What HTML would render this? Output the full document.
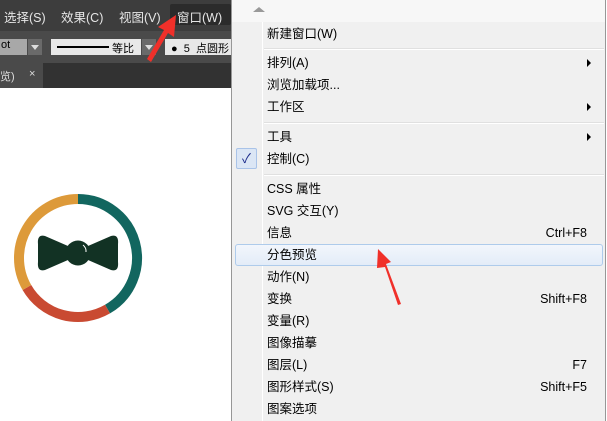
<!DOCTYPE html><html><head><meta charset="utf-8"><style>
*{margin:0;padding:0;box-sizing:border-box}
body{width:607px;height:421px;position:relative;overflow:hidden;background:#fff;font-family:"Liberation Sans","Noto Sans CJK SC",sans-serif;font-size:12px}
.mb{position:absolute;left:0;top:0;width:231px;height:31px;background:#3d3d3d;color:#e6e6e6}
.mb span{position:absolute;top:7px;font-size:12.5px}
.tb{position:absolute;left:0;top:31px;width:231px;height:32px;background:#4a4a4a}
.tab{position:absolute;left:0;top:63px;width:231px;height:25px;background:#323232}
.menu{position:absolute;left:231px;top:0;width:375px;height:421px;background:#f0f0f0;border-left:1px solid #979797;border-right:1px solid #979797}
.gut{position:absolute;left:30px;top:22px;width:1px;height:399px;background:#e2e3e3;border-right:1px solid #fff}
.it{position:absolute;left:35px;font-size:12.5px;color:#000;line-height:22px;height:22px;width:330px}
.it b{position:absolute;right:10px;font-weight:normal}
.it i{position:absolute;right:6px;top:7px;width:0;height:0;border-left:4px solid #000;border-top:4px solid transparent;border-bottom:4px solid transparent}
.sep{position:absolute;left:32px;width:340px;height:2px;border-top:1px solid #e0e0e0;border-bottom:1px solid #fff}
.dd{position:absolute;top:8px;width:14px;height:16px;background:#6a6a6a}
.dd::after{content:"";position:absolute;left:3px;top:6px;border-top:5px solid #ddd;border-left:4px solid transparent;border-right:4px solid transparent}
</style></head><body>
<div class="mb"><span style="left:4px">选择(S)</span><span style="left:61px">效果(C)</span><span style="left:119px">视图(V)</span>
<div style="position:absolute;left:170px;top:4px;width:61px;height:21px;background:#2b2b2b;border-radius:2px"></div><span style="left:177px">窗口(W)</span></div>
<div class="tb">
<div style="position:absolute;left:0;top:8px;width:27px;height:16px;background:#a8a8a8;font-size:11px;padding-left:1px">ot</div>
<div class="dd" style="left:28px"></div>
<div style="position:absolute;left:51px;top:8px;width:90px;height:16px;background:#e8e8e8"><div style="position:absolute;left:6px;top:7px;width:52px;height:2px;background:#000"></div><span style="position:absolute;left:61px;top:1px;font-size:11px">等比</span></div>
<div class="dd" style="left:142px"></div>
<div style="position:absolute;left:165px;top:8px;width:66px;height:16px;background:#e8e8e8;font-size:11px;padding:1px 0 0 6px">●&nbsp; 5 &nbsp;点圆形</div></div>
<div class="tab"><div style="position:absolute;left:0;top:0;width:43px;height:25px;background:#4a4a4a;color:#ddd;font-size:11px;padding-top:5px">览)<span style="position:absolute;left:29px">×</span></div></div>
<svg style="position:absolute;left:0;top:88px" width="231" height="333">
<g fill="none" stroke-width="10">
<path d="M78 111 A59 59 0 0 1 107.5 221.1" stroke="#12665f"/>
<path d="M107.5 221.1 A59 59 0 0 1 26.9 199.5" stroke="#c94a32"/>
<path d="M26.9 199.5 A59 59 0 0 1 78 111" stroke="#dd9a3a"/>
</g>
<path d="M38 156 Q37 146 45 148 L68 158 L88 158 L111 148 Q119 146 118 156 L118 174 Q119 184 111 182 L88 172 L68 172 L45 182 Q37 184 38 174Z" fill="#123224"/>
<circle cx="78" cy="165" r="12.5" fill="#123224"/>
<path d="M83 157 A8 8 0 0 1 86 164" stroke="#fff" stroke-width="1" fill="none"/>
</svg>
<div class="menu">
<div style="position:absolute;left:0;top:0;width:373px;height:22px;background:#f7f7f7"></div>
<div style="position:absolute;left:21px;top:7px;border-bottom:5px solid #999;border-left:6px solid transparent;border-right:6px solid transparent"></div>
<div class="gut"></div>
<div class="it" style="top:23px">新建窗口(W)</div>
<div class="sep" style="top:48px"></div>
<div class="it" style="top:52px">排列(A)<i></i></div>
<div class="it" style="top:74px">浏览加载项...</div>
<div class="it" style="top:96px">工作区<i></i></div>
<div class="sep" style="top:122px"></div>
<div class="it" style="top:126px">工具<i></i></div>
<div style="position:absolute;left:4px;top:148px;width:21px;height:21px;background:#dbe6f5;border:1px solid #a9c3e8;border-radius:2px;color:#1b2a8a;text-align:center;line-height:19px;font-size:13px">✓</div>
<div class="it" style="top:148px">控制(C)</div>
<div class="sep" style="top:174px"></div>
<div class="it" style="top:178px">CSS 属性</div>
<div class="it" style="top:200px">SVG 交互(Y)</div>
<div class="it" style="top:222px">信息<b>Ctrl+F8</b></div>
<div style="position:absolute;left:3px;top:244px;width:368px;height:22px;background:linear-gradient(#f2f6fc,#e3ecf8);border:1px solid #aecbeb;border-radius:3px"></div>
<div class="it" style="top:244px">分色预览</div>
<div class="it" style="top:266px">动作(N)</div>
<div class="it" style="top:288px">变换<b>Shift+F8</b></div>
<div class="it" style="top:310px">变量(R)</div>
<div class="it" style="top:332px">图像描摹</div>
<div class="it" style="top:354px">图层(L)<b>F7</b></div>
<div class="it" style="top:376px">图形样式(S)<b>Shift+F5</b></div>
<div class="it" style="top:398px">图案选项</div>
</div>
<svg style="position:absolute;left:0;top:0" width="607" height="421">
<path d="M147 59 L164 30 L158 27 L176 15 L174 37 L168 33 L151 62Z" fill="#f0302a"/>
<path d="M398 305 L385 267 L377 268 L378 249 L391 262 L386 264 L401 304Z" fill="#f0302a"/>
</svg>
</body></html>
